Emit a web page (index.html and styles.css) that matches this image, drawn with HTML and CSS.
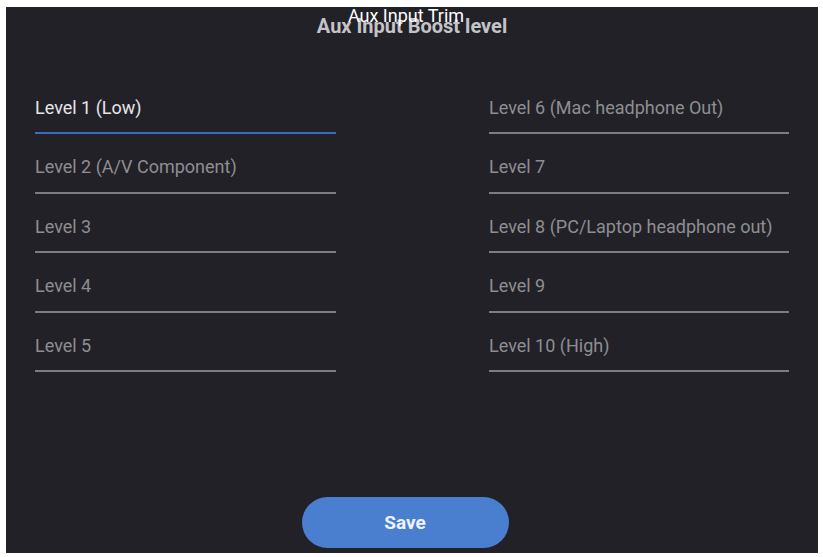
FILE: index.html
```html
<!DOCTYPE html>
<html>
<head>
<meta charset="utf-8">
<link rel="stylesheet" href="styles.css">
</head>
<body>
<div class="panel">
  <div class="title-wrap">
    <div class="title">Aux Input Boost level</div>
    <div class="title-overlay">Aux Input Trim</div>
  </div>
  <div class="grid">
    <div class="col">
      <div class="item active"><span>Level 1 (Low)</span></div>
      <div class="item"><span>Level 2 (A/V Component)</span></div>
      <div class="item"><span>Level 3</span></div>
      <div class="item"><span>Level 4</span></div>
      <div class="item"><span>Level 5</span></div>
    </div>
    <div class="col">
      <div class="item"><span>Level 6 (Mac headphone Out)</span></div>
      <div class="item"><span>Level 7</span></div>
      <div class="item"><span>Level 8 (PC/Laptop headphone out)</span></div>
      <div class="item"><span>Level 9</span></div>
      <div class="item"><span>Level 10 (High)</span></div>
    </div>
  </div>
  <div class="actions">
    <button class="save">Save</button>
  </div>
</div>
</body>
</html>
```
FILE: styles.css
```css
html, body {
  margin: 0;
  padding: 0;
  background: #ffffff;
}
body {
  padding: 7px 5px 4px 6px;
  font-family: Roboto, "Liberation Sans", sans-serif;
}
.panel {
  width: 812px;
  height: 546px;
  background: #222127;
  box-sizing: border-box;
  display: flex;
  flex-direction: column;
}
.title-wrap {
  position: relative;
  height: 38px;
  display: flex;
  justify-content: center;
}
.title {
  margin-top: 8px;
  font-size: 20px;
  line-height: 23px;
  font-weight: 700;
  color: #c4c4c8;
}
.title-overlay {
  position: absolute;
  top: -2px;
  left: 0;
  right: 12px;
  text-align: center;
  font-size: 18px;
  line-height: 21px;
  color: #ffffff;
}
.grid {
  display: grid;
  grid-template-columns: 301px 300px;
  column-gap: 153px;
  padding-left: 29px;
  margin-top: 29.5px;
}
.col {
  display: flex;
  flex-direction: column;
}
.item {
  height: 59.5px;
  box-sizing: border-box;
  border-bottom: 2px solid #7d7d80;
  display: flex;
  align-items: flex-start;
  padding-top: 22px;
  font-size: 18px;
  line-height: 21px;
  color: #8e8e92;
}
.item.active {
  color: #e6e6e8;
  border-bottom-color: #3b6cc0;
}
.actions {
  margin-top: auto;
  display: flex;
  justify-content: center;
  padding-bottom: 5px;
  padding-right: 14px;
}
.save {
  width: 207px;
  height: 51px;
  border: none;
  border-radius: 26px;
  background: #4a7ecf;
  color: #eef4ff;
  font-family: Roboto, "Liberation Sans", sans-serif;
  font-size: 19px;
  font-weight: 700;
}
```
